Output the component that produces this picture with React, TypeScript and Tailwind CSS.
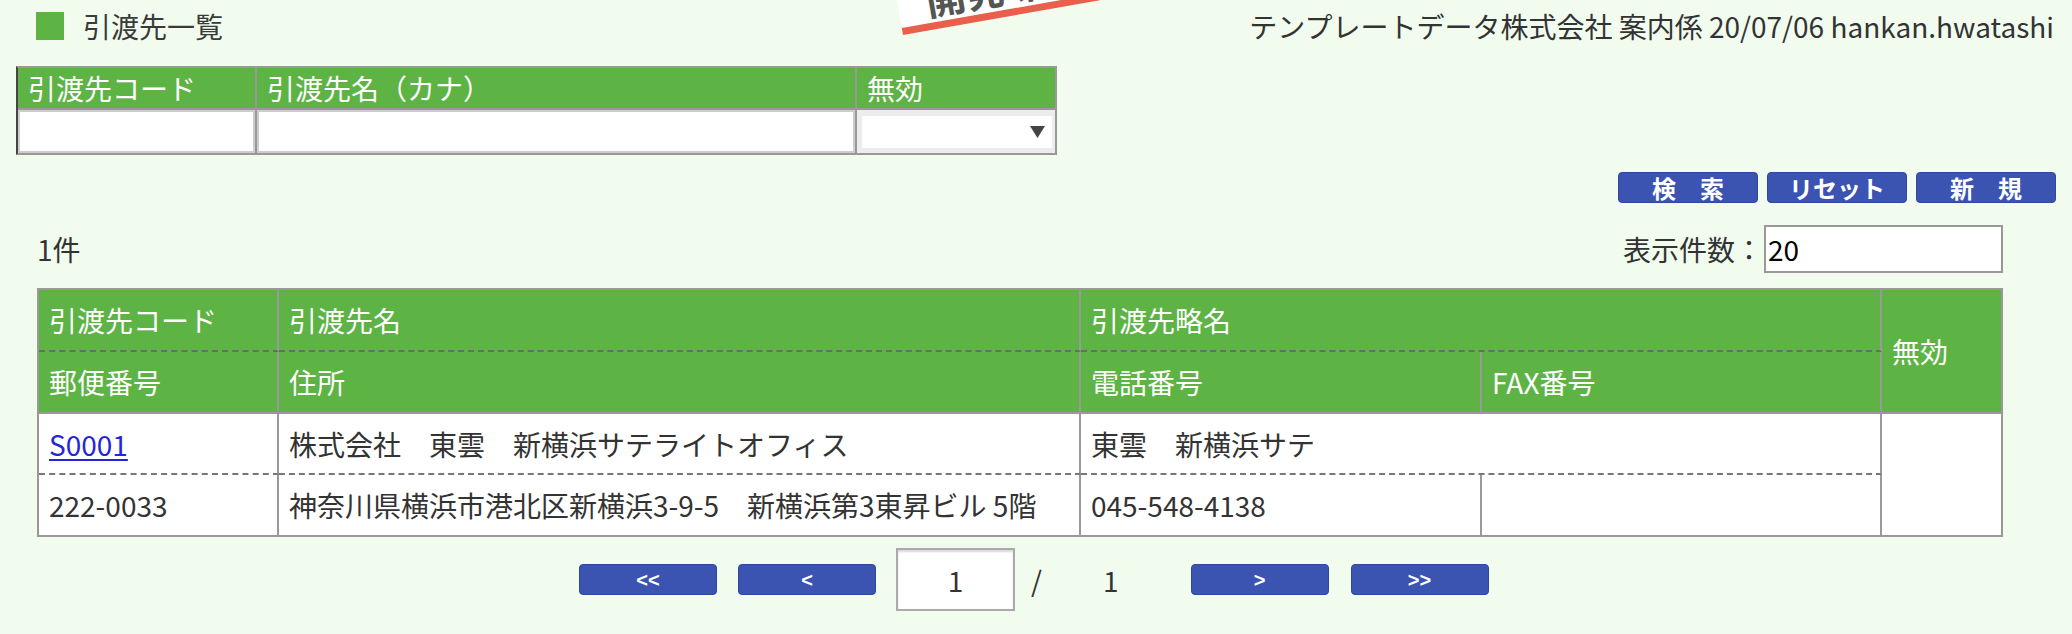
import React from "react";

const GREEN = "bg-[#5db344]";

function BlueBtn({ label, w = "w-[140px]", size = "text-[24px]" }: { label: string; w?: string; size?: string }) {
  return (
    <div
      className={`${w} h-[31px] rounded-[4px] bg-[#3b53b1] border border-[#30479f] text-white ${size} font-bold leading-none flex items-center justify-center`}
    >
      {label}
    </div>
  );
}

function PageBtn({ label }: { label: string }) {
  return (
    <div className="w-[138px] h-[31px] rounded-[4px] bg-[#3b53b1] border border-[#30479f] text-white text-[20px] font-bold leading-none flex items-center justify-center font-['Liberation_Sans',sans-serif]">
      {label}
    </div>
  );
}

export default function App() {
  const hcell = `${GREEN} text-white flex items-center pl-[10px] text-[28px] leading-none`;
  const dcell = "bg-white text-[#333] flex items-center pl-[10px] text-[28px] leading-none";
  const vr = "border-r-2 border-r-[#999]";
  const dashB = "border-b-2 border-b-[#6b6b6b] [border-bottom-style:dashed]";
  const dashBD = "border-b-2 border-b-[#777] [border-bottom-style:dashed]";
  const solidB = "border-b-2 border-b-[#999]";

  return (
    <div className="relative w-full min-h-[634px] bg-[#f1fcef] overflow-hidden font-['Noto_Sans_CJK_JP','Noto_Sans',sans-serif] text-[#333]">
      {/* stamp overlay */}
      <div className="absolute left-[903px] top-[-45px] w-[200px] h-[80px] origin-bottom-left -rotate-[10deg] bg-white border-b-[7px] border-b-[#e8604c] flex items-end pl-[28px] pb-[4px]">
        <span className="text-[40px] font-bold text-[#555] leading-none">開発環境</span>
      </div>

      {/* header */}
      <div className="h-[52px] flex items-center justify-between pl-[36px] pr-[18px]">
        <div className="flex items-center">
          <div className="w-[28px] h-[28px] bg-[#5db344]" />
          <span className="ml-[19px] text-[28px] leading-none text-[#3a3a3a]">引渡先一覧</span>
        </div>
        <div className="text-[28px] leading-none text-[#333]">
          テンプレートデータ株式会社 案内係 20/07/06 hankan.hwatashi
        </div>
      </div>

      {/* search table */}
      <div className="ml-[16px] mt-[14px] w-[1041px] border-2 border-[#999] border-l-[#444]">
        <div className="grid grid-cols-[239px_600px_198px] grid-rows-[40px_45px]">
          <div className={`${hcell} ${vr} pl-[9px]`}>引渡先コード</div>
          <div className={`${hcell} ${vr} pl-[9px]`}>引渡先名（カナ）</div>
          <div className={`${hcell} pl-[9px]`}>無効</div>
          <div className={`border-t-2 border-t-[#999] ${vr} bg-white`}>
            <div className="w-full h-full border-2 border-[#cdcdcd] bg-white" />
          </div>
          <div className={`border-t-2 border-t-[#999] ${vr} bg-white`}>
            <div className="w-full h-full border-2 border-[#cdcdcd] bg-white" />
          </div>
          <div className="border-t-2 border-t-[#999] bg-[#ececec] pt-[6px] pb-[5px] pl-[5px] pr-[3px]">
            <div className="w-full h-full bg-white flex items-center justify-end pr-[7px]">
              <svg width="15" height="12" viewBox="0 0 15 12">
                <polygon points="0,0 15,0 7.5,12" fill="#444" />
              </svg>
            </div>
          </div>
        </div>
      </div>

      {/* action buttons */}
      <div className="mt-[17px] flex justify-end gap-[9px] pr-[16px]">
        <BlueBtn label="検　索" />
        <BlueBtn label="リセット" />
        <BlueBtn label="新　規" />
      </div>

      {/* count row */}
      <div className="mt-[22px] h-[48px] flex items-center justify-between pl-[37px] pr-[69px]">
        <span className="text-[28px] leading-none text-[#333]">1件</span>
        <div className="flex items-center">
          <span className="text-[28px] leading-none text-[#333]">表示件数：</span>
          <div className="ml-[1px] w-[239px] h-[48px] border-2 border-[#999] bg-white flex items-center pl-[2px] text-[28px] leading-none text-black">
            20
          </div>
        </div>
      </div>

      {/* main table */}
      <div className="ml-[37px] mt-[15px] w-[1966px] border-2 border-[#999] bg-white">
        <div className="grid grid-cols-[240px_802px_401px_400px_119px] grid-rows-[62px_62px_61px_60px]">
          <div className={`${hcell} ${vr} ${dashB} col-start-1 row-start-1`}>引渡先コード</div>
          <div className={`${hcell} ${vr} ${dashB} col-start-2 row-start-1`}>引渡先名</div>
          <div className={`${hcell} ${vr} ${dashB} col-start-3 col-span-2 row-start-1`}>引渡先略名</div>
          <div className={`${hcell} ${solidB} col-start-5 row-start-1 row-span-2`}>無効</div>

          <div className={`${hcell} ${vr} ${solidB} col-start-1 row-start-2`}>郵便番号</div>
          <div className={`${hcell} ${vr} ${solidB} col-start-2 row-start-2`}>住所</div>
          <div className={`${hcell} ${vr} ${solidB} col-start-3 row-start-2`}>電話番号</div>
          <div className={`${hcell} ${vr} ${solidB} col-start-4 row-start-2`}>FAX番号</div>

          <div className={`${dcell} ${vr} ${dashBD} col-start-1 row-start-3`}>
            <a href="#" className="text-[#2525d8] underline underline-offset-[3px]">S0001</a>
          </div>
          <div className={`${dcell} ${vr} ${dashBD} col-start-2 row-start-3`}>株式会社　東雲　新横浜サテライトオフィス</div>
          <div className={`${dcell} ${vr} ${dashBD} col-start-3 col-span-2 row-start-3`}>東雲　新横浜サテ</div>
          <div className="bg-white col-start-5 row-start-3 row-span-2" />

          <div className={`${dcell} ${vr} col-start-1 row-start-4`}>222-0033</div>
          <div className={`${dcell} ${vr} col-start-2 row-start-4`}>神奈川県横浜市港北区新横浜3-9-5　新横浜第3東昇ビル 5階</div>
          <div className={`${dcell} ${vr} col-start-3 row-start-4`}>045-548-4138</div>
          <div className={`${dcell} ${vr} col-start-4 row-start-4`}></div>
        </div>
      </div>

      {/* pagination */}
      <div className="mt-[11px] h-[63px] flex items-center pl-[579px]">
        <PageBtn label="<<" />
        <div className="ml-[21px]">
          <PageBtn label="<" />
        </div>
        <div className="ml-[20px] w-[119px] h-[63px] border-2 border-[#aaa] bg-white shadow-[inset_0_2px_2px_rgba(0,0,0,0.15)] flex items-center justify-center text-[28px] leading-none text-[#333]">
          1
        </div>
        <span className="ml-[16px] text-[28px] leading-none text-[#333]">/</span>
        <span className="ml-[61px] text-[28px] leading-none text-[#333]">1</span>
        <div className="ml-[72px]">
          <PageBtn label=">" />
        </div>
        <div className="ml-[22px]">
          <PageBtn label=">>" />
        </div>
      </div>
    </div>
  );
}
